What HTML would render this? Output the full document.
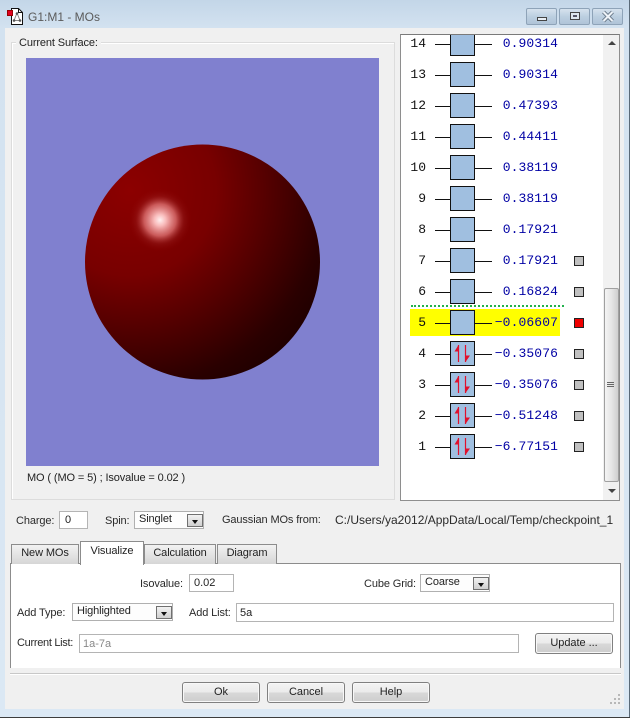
<!DOCTYPE html>
<html><head><meta charset="utf-8"><style>
html,body{margin:0;padding:0;width:634px;height:720px;overflow:hidden;background:#fff}
*{box-sizing:border-box}
body{position:relative;font:11px "Liberation Sans",sans-serif;color:#222}
.a{position:absolute}
.t{position:absolute;white-space:nowrap;line-height:14px;font-size:11px;letter-spacing:-.12px;color:#2a2a2a}
.inp{position:absolute;background:#fff;border:1px solid #b4b4b4;padding:0 0 0 5px;font-size:11px;line-height:18px;color:#222;white-space:nowrap}
.combo{position:absolute;background:#fdfdfd;border:1px solid #b0b0b0;padding-left:4px;font-size:11px;letter-spacing:-.12px;line-height:15px;color:#222;white-space:nowrap}
.combo i{position:absolute;right:0;top:2px;bottom:1px;width:16px;border:1px solid #707070;background:linear-gradient(#f2f2f2,#cfcfcf)}
.combo i:after{content:"";position:absolute;left:4px;top:5px;border:3px solid transparent;border-top:4px solid #111;border-bottom:0}
.btn{position:absolute;border:1px solid #808080;border-radius:3px;background:linear-gradient(#f4f4f4 0,#ebebeb 48%,#d8d8d8 52%,#cdcdcd 100%);text-align:center;font-size:11px;letter-spacing:-.05px;line-height:19px;color:#222;box-shadow:inset 0 0 0 1px #f8f8f8}
.tab{position:absolute;border:1px solid #8c8c8c;border-bottom:0;background:linear-gradient(#f2f2f2,#d6d6d6);text-align:center;font-size:11px;letter-spacing:-.1px;line-height:16px;color:#222}
.cap{position:absolute;top:8px;height:17px;width:31px;border:1px solid #8ea3b8;border-radius:2px;background:linear-gradient(#d6e2ee,#bccfe0 50%,#b0c4d8)}
.n{position:absolute;left:400px;width:26px;text-align:right;font:13px/14px "Liberation Mono",monospace;color:#111;letter-spacing:0}
.v{position:absolute;left:480px;width:78px;text-align:right;font:13px/14px "Liberation Mono",monospace;color:#0000a4;letter-spacing:.1px}
.b{position:absolute;left:450px;width:25px;height:25px;background:#a0bfe0;border:1px solid #111}
.l1{position:absolute;left:435px;width:15px;height:1px;background:#111}
.l2{position:absolute;left:475px;width:17px;height:1px;background:#111}
.s{position:absolute;left:574px;width:10px;height:10px;background:#c0c0c0;border:1px solid #222}
</style></head><body>
<div class="a" style="left:0;top:0;width:630px;height:717px;background:linear-gradient(#c3d6e8 0,#d3e2f0 28px,#dbe8f4 100%)"></div>
<div class="a" style="left:629px;top:0;width:1px;height:717px;background:#5a6a78"></div>
<div class="a" style="left:0;top:717px;width:630px;height:1px;background:#3c3c3c"></div>
<div class="a" style="left:5px;top:28px;width:619px;height:681px;background:#f0f0f0"></div>

<svg class="a" style="left:6px;top:7px" width="18" height="19" viewBox="0 0 18 19">
<path d="M5.5 1.5H12.5L16.5 5.5V17.5H5.5Z" fill="#fff" stroke="#111"/>
<path d="M12.5 1.5V5.5H16.5" fill="none" stroke="#111"/>
<path d="M11 6L8 13.5M11 6L14 13.5M8 13.5H14" stroke="#888" stroke-width="1" fill="none"/>
<circle cx="11" cy="6.5" r="1.3" fill="#555"/><circle cx="8" cy="13.5" r="1.3" fill="#555"/><circle cx="14" cy="13.5" r="1.3" fill="#555"/>
<rect x="1.5" y="3.5" width="5" height="5" fill="#e00020" stroke="#900"/>
</svg>
<div class="t" style="left:28px;top:10px;color:#5a5a5a;font-size:12px;letter-spacing:0">G1:M1 - MOs</div>

<div class="cap" style="left:526px"><div class="a" style="left:10px;top:8px;width:10px;height:4px;border:1px solid #444;background:#e8eef4"></div></div>
<div class="cap" style="left:559px"><div class="a" style="left:10px;top:3px;width:10px;height:8px;border:1px solid #444;background:#dde6ee"><div class="a" style="left:2px;top:2px;width:4px;height:2px;background:#556"></div></div></div>
<div class="cap" style="left:592px"><svg class="a" style="left:8px;top:1px" width="14" height="13"><path d="M2.5 2L11.5 11M11.5 2L2.5 11" stroke="#6a7a8a" stroke-width="4"/><path d="M2.5 2L11.5 11M11.5 2L2.5 11" stroke="#eef3f8" stroke-width="2"/></svg></div>

<div class="a" style="left:11px;top:42px;width:384px;height:458px;border:1px solid #dcdcdc;box-shadow:inset 1px 1px 0 #fff"></div>
<div class="t" style="left:16px;top:36px;background:#f0f0f0;padding:0 3px;color:#222">Current Surface:</div>
<div class="a" style="left:26px;top:58px;width:353px;height:408px;background:#8080cf"></div>
<svg class="a" style="left:26px;top:58px" width="353" height="408" viewBox="26 58 353 408">
<defs>
<radialGradient id="g" gradientUnits="userSpaceOnUse" cx="130" cy="190" r="245">
<stop offset="0" stop-color="#8c0000"/><stop offset=".35" stop-color="#780000"/><stop offset=".55" stop-color="#560000"/><stop offset=".8" stop-color="#2a0000"/><stop offset="1" stop-color="#160000"/>
</radialGradient>
<radialGradient id="h" gradientUnits="userSpaceOnUse" cx="160" cy="220" r="32">
<stop offset="0" stop-color="#fff0f0"/><stop offset=".18" stop-color="#f9bcbc"/><stop offset=".5" stop-color="#dc7070" stop-opacity=".8"/><stop offset=".75" stop-color="#a83030" stop-opacity=".25"/><stop offset="1" stop-color="#8c0000" stop-opacity="0"/>
</radialGradient>
</defs>
<circle cx="202.5" cy="262" r="117.5" fill="url(#g)"/>
<circle cx="160" cy="220" r="32" fill="url(#h)"/>
</svg>
<div class="t" style="left:27px;top:471px;color:#222">MO ( (MO = 5) ; Isovalue = 0.02 )</div>

<div class="a" style="left:400px;top:34px;width:220px;height:467px;background:#fff;border:1px solid #8e8e8e;border-top-color:#7a7a7a"></div>
<div class="a" style="left:603px;top:35px;width:16px;height:465px;background:#f1f1f1"></div>
<div class="a" style="left:604px;top:288px;width:15px;height:194px;border:1px solid #a0a0a0;border-radius:2px;background:linear-gradient(90deg,#f4f4f4,#e6e6e6 50%,#cfcfcf)"></div>
<div class="a" style="left:607px;top:382px;width:7px;height:1px;background:#666;box-shadow:0 2px 0 #666,0 4px 0 #666"></div>
<div class="a" style="left:608px;top:41px;border:4px solid transparent;border-bottom:4px solid #444;border-top:0"></div>
<div class="a" style="left:608px;top:489px;border:4px solid transparent;border-top:4px solid #444;border-bottom:0"></div>

<div class="a" style="left:410px;top:309px;width:150px;height:27px;background:#ffff00"></div>
<div class="a" style="left:411px;top:305px;width:153px;height:0;border-top:2px dotted #22b14c"></div>

<div class="b" style="top:35px;height:21px;border-top:0"></div><div class="l1" style="top:44px"></div><div class="l2" style="top:44px"></div><div class="n" style="top:37px">14</div><div class="v" style="top:37px">0.90314</div>
<div class="b" style="top:62px"></div><div class="l1" style="top:75px"></div><div class="l2" style="top:75px"></div><div class="n" style="top:68px">13</div><div class="v" style="top:68px">0.90314</div>
<div class="b" style="top:93px"></div><div class="l1" style="top:106px"></div><div class="l2" style="top:106px"></div><div class="n" style="top:99px">12</div><div class="v" style="top:99px">0.47393</div>
<div class="b" style="top:124px"></div><div class="l1" style="top:137px"></div><div class="l2" style="top:137px"></div><div class="n" style="top:130px">11</div><div class="v" style="top:130px">0.44411</div>
<div class="b" style="top:155px"></div><div class="l1" style="top:168px"></div><div class="l2" style="top:168px"></div><div class="n" style="top:161px">10</div><div class="v" style="top:161px">0.38119</div>
<div class="b" style="top:186px"></div><div class="l1" style="top:199px"></div><div class="l2" style="top:199px"></div><div class="n" style="top:192px">9</div><div class="v" style="top:192px">0.38119</div>
<div class="b" style="top:217px"></div><div class="l1" style="top:230px"></div><div class="l2" style="top:230px"></div><div class="n" style="top:223px">8</div><div class="v" style="top:223px">0.17921</div>
<div class="b" style="top:248px"></div><div class="l1" style="top:261px"></div><div class="l2" style="top:261px"></div><div class="n" style="top:254px">7</div><div class="v" style="top:254px">0.17921</div><div class="s" style="top:256px"></div>
<div class="b" style="top:279px"></div><div class="l1" style="top:292px"></div><div class="l2" style="top:292px"></div><div class="n" style="top:285px">6</div><div class="v" style="top:285px">0.16824</div><div class="s" style="top:287px"></div>
<div class="b" style="top:310px"></div><div class="l1" style="top:323px"></div><div class="l2" style="top:323px"></div><div class="n" style="top:316px">5</div><div class="v" style="top:316px">&minus;0.06607</div><div class="s" style="top:318px;background:#f00000"></div>

<svg width="0" height="0" style="position:absolute"><defs>
<symbol id="ud" viewBox="0 0 23 23"><path d="M7.5 3V20M14.5 3V20" stroke="#e0102c" stroke-width="1.2" fill="none"/><path d="M7.5 3L3.5 9.5H7.5Z" fill="#e0102c"/><path d="M14.5 20L19 13.5H14.5Z" fill="#e0102c"/></symbol>
</defs></svg>
<div class="b" style="top:341px"><svg width="23" height="23" style="display:block"><use href="#ud"/></svg></div><div class="l1" style="top:354px"></div><div class="l2" style="top:354px"></div><div class="n" style="top:347px">4</div><div class="v" style="top:347px">&minus;0.35076</div><div class="s" style="top:349px"></div>
<div class="b" style="top:372px"><svg width="23" height="23" style="display:block"><use href="#ud"/></svg></div><div class="l1" style="top:385px"></div><div class="l2" style="top:385px"></div><div class="n" style="top:378px">3</div><div class="v" style="top:378px">&minus;0.35076</div><div class="s" style="top:380px"></div>
<div class="b" style="top:403px"><svg width="23" height="23" style="display:block"><use href="#ud"/></svg></div><div class="l1" style="top:416px"></div><div class="l2" style="top:416px"></div><div class="n" style="top:409px">2</div><div class="v" style="top:409px">&minus;0.51248</div><div class="s" style="top:411px"></div>
<div class="b" style="top:434px"><svg width="23" height="23" style="display:block"><use href="#ud"/></svg></div><div class="l1" style="top:447px"></div><div class="l2" style="top:447px"></div><div class="n" style="top:440px">1</div><div class="v" style="top:440px">&minus;6.77151</div><div class="s" style="top:442px"></div>

<div class="t" style="left:16px;top:514px">Charge:</div>
<div class="inp" style="left:59px;top:511px;width:29px;height:18px;line-height:17px">0</div>
<div class="t" style="left:105px;top:514px">Spin:</div>
<div class="combo" style="left:134px;top:511px;width:70px;height:18px">Singlet<i></i></div>
<div class="t" style="left:222px;top:513px">Gaussian MOs from:</div>
<div class="t" style="left:335px;top:513px;font-size:12px;letter-spacing:0">C:/Users/ya2012/AppData/Local/Temp/checkpoint_1</div>

<div class="a" style="left:10px;top:563px;width:611px;height:105px;background:#fff;border:1px solid #8c8c8c;border-bottom:0"></div>
<div class="tab" style="left:11px;top:544px;width:68px;height:20px">New MOs</div>
<div class="tab" style="left:80px;top:541px;width:64px;height:24px;background:#fff;line-height:19px;z-index:2">Visualize</div>
<div class="tab" style="left:144px;top:544px;width:72px;height:20px">Calculation</div>
<div class="tab" style="left:217px;top:544px;width:60px;height:20px">Diagram</div>

<div class="t" style="left:140px;top:577px">Isovalue:</div>
<div class="inp" style="left:189px;top:574px;width:45px;height:18px;line-height:17px;padding-left:4px">0.02</div>
<div class="t" style="left:364px;top:577px">Cube Grid:</div>
<div class="combo" style="left:420px;top:574px;width:70px;height:18px">Coarse<i></i></div>

<div class="t" style="left:17px;top:606px">Add Type:</div>
<div class="combo" style="left:72px;top:603px;width:101px;height:18px">Highlighted<i></i></div>
<div class="t" style="left:189px;top:606px">Add List:</div>
<div class="inp" style="left:236px;top:603px;width:378px;height:19px;padding-left:3px">5a</div>

<div class="t" style="left:17px;top:636px;letter-spacing:-.3px">Current List:</div>
<div class="inp" style="left:79px;top:634px;width:440px;height:19px;padding-left:3px;color:#888">1a-7a</div>
<div class="btn" style="left:535px;top:633px;width:78px;height:21px">Update ...</div>

<div class="a" style="left:10px;top:673px;width:611px;height:1px;background:#c8c8c8;box-shadow:0 1px 0 #fff"></div>
<div class="btn" style="left:182px;top:682px;width:78px;height:21px">Ok</div>
<div class="btn" style="left:267px;top:682px;width:78px;height:21px">Cancel</div>
<div class="btn" style="left:352px;top:682px;width:78px;height:21px">Help</div>
<svg class="a" style="left:608px;top:692px" width="14" height="14"><g fill="#b8b8b8"><rect x="10" y="2" width="2" height="2"/><rect x="6" y="6" width="2" height="2"/><rect x="10" y="6" width="2" height="2"/><rect x="2" y="10" width="2" height="2"/><rect x="6" y="10" width="2" height="2"/><rect x="10" y="10" width="2" height="2"/></g></svg>
</body></html>
